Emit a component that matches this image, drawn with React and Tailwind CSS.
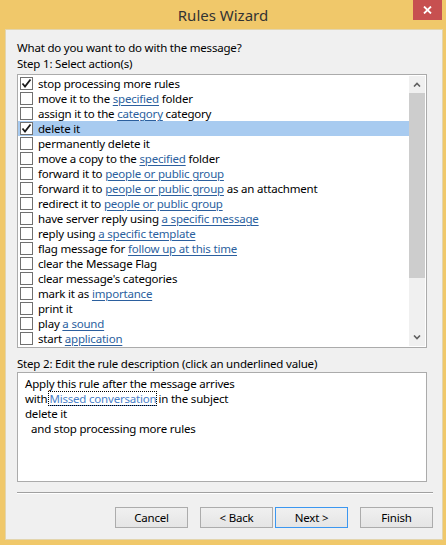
import React from 'react';

const font = { fontFamily: '"Segoe UI", "Noto Sans", "Open Sans", sans-serif' };

// each action is a list of parts; strings are plain text, objects are links
const actions = [
    { checked: true, parts: ['stop processing more rules'] },
    { parts: ['move it to the ', { link: 'specified' }, ' folder'] },
    { parts: ['assign it to the ', { link: 'category' }, ' category'] },
    { checked: true, selected: true, parts: ['delete it'] },
    { parts: ['permanently delete it'] },
    { parts: ['move a copy to the ', { link: 'specified' }, ' folder'] },
    { parts: ['forward it to ', { link: 'people or public group' }] },
    { parts: ['forward it to ', { link: 'people or public group' }, ' as an attachment'] },
    { parts: ['redirect it to ', { link: 'people or public group' }] },
    { parts: ['have server reply using ', { link: 'a specific message' }] },
    { parts: ['reply using ', { link: 'a specific template' }] },
    { parts: ['flag message for ', { link: 'follow up at this time' }] },
    { parts: ['clear the Message Flag'] },
    { parts: ["clear message's categories"] },
    { parts: ['mark it as ', { link: 'importance' }] },
    { parts: ['print it'] },
    { parts: ['play ', { link: 'a sound' }] },
    { parts: ['start ', { link: 'application' }] },
];

function Checkbox({ checked }) {
    return (
        <div className="w-[13px] h-[13px] border border-[#707070] bg-white flex items-center justify-center shrink-0">
            {checked && (
                <svg width="11" height="11" viewBox="0 0 11 11">
                    <path d="M1.5 5.5 L4 8.5 L9.5 1.5" stroke="#1a1a1a" strokeWidth="1.8" fill="none" />
                </svg>
            )}
        </div>
    );
}

function Link({ children }) {
    return <span className="text-[#2b5f9e] underline underline-offset-2 decoration-[#2b5f9e]">{children}</span>;
}

function Button({ children, focused }) {
    return (
        <button
            className={`w-[73px] h-[21px] text-[11.5px] text-black bg-gradient-to-b from-[#f0f0f0] to-[#e5e5e5] border ${focused ? 'border-[#3c97f0]' : 'border-[#acacac]'} flex items-center justify-center`}
        >
            {children}
        </button>
    );
}

export default function App() {
    return (
        <div className="w-[446px] h-[545px] bg-[#f0c86a] flex flex-col" style={font}>
            {/* title bar */}
            <div className="h-[29px] shrink-0 relative flex items-start justify-center">
                <div className="text-[15px] text-[#333333] mt-[4px] leading-[22px]">Rules Wizard</div>
                <div className="absolute right-[4px] top-0 w-[29px] h-[20px] bg-[#c75050] flex items-center justify-center">
                    <svg width="9" height="8" viewBox="0 0 9 8">
                        <path d="M1 0.5 L8 7.5 M8 0.5 L1 7.5" stroke="white" strokeWidth="1.8" />
                    </svg>
                </div>
            </div>

            {/* client area */}
            <div className="flex-1 ml-[5px] mr-[3px] mb-[5px] bg-[#f0f0f0] border border-[#e3d5ae] flex flex-col pl-[11px] pr-[9px] text-[11.5px] tracking-[-0.2px] text-black">
                <div className="mt-[10px] leading-[16px]">What do you want to do with the message?</div>
                <div className="leading-[16px]">Step 1: Select action(s)</div>

                {/* action list */}
                <div className="mt-[2px] w-[410px] h-[274px] border border-[#ababab] bg-white flex">
                    <div className="flex-1 flex flex-col pt-[1px]">
                        {actions.map((a, i) => (
                            <div
                                key={i}
                                className={`h-[15px] flex items-center gap-[5px] pl-[2px] whitespace-nowrap leading-[15px] ${a.selected ? 'bg-[#a8cbf0]' : ''}`}
                            >
                                <Checkbox checked={a.checked} />
                                <span>
                                    {a.parts.map((p, j) =>
                                        typeof p === 'string' ? <span key={j}>{p}</span> : <Link key={j}>{p.link}</Link>
                                    )}
                                </span>
                            </div>
                        ))}
                    </div>
                    {/* scrollbar */}
                    <div className="w-[16px] bg-[#f0f0f0] flex flex-col mr-[1px] my-[1px]">
                        <div className="h-[17px] flex items-center justify-center">
                            <svg width="8" height="5" viewBox="0 0 8 5">
                                <path d="M1 4.5 L4 1.5 L7 4.5" stroke="#606060" strokeWidth="1.6" fill="none" />
                            </svg>
                        </div>
                        <div className="h-[185px] bg-[#cdcdcd]" />
                        <div className="flex-1" />
                        <div className="h-[17px] flex items-center justify-center">
                            <svg width="8" height="5" viewBox="0 0 8 5">
                                <path d="M1 0.5 L4 3.5 L7 0.5" stroke="#606060" strokeWidth="1.6" fill="none" />
                            </svg>
                        </div>
                    </div>
                </div>

                <div className="mt-[8px] leading-[16px]">Step 2: Edit the rule description (click an underlined value)</div>

                {/* description box */}
                <div className="w-[410px] h-[110px] border border-[#ababab] bg-white px-[7px] pt-[3px] leading-[15px]">
                    <div>Apply this rule after the message arrives</div>
                    <div>
                        with
                        <span className="outline outline-1 outline-dotted outline-black -outline-offset-1 px-[1px] mx-[1px]">
                            <span className="text-[#4a7fc9] underline underline-offset-2 decoration-[#4a7fc9]">Missed conversation</span>
                        </span>
                        in the subject
                    </div>
                    <div>delete it</div>
                    <div className="pl-[6px]">and stop processing more rules</div>
                </div>

                <div className="mt-[10px] h-[1px] bg-[#a0a0a0] border-b border-white box-content" />

                <div className="mt-[13px] flex justify-end">
                    <div className="flex">
                        <Button>Cancel</Button>
                        <div className="w-[12px]" />
                        <Button>&lt; Back</Button>
                        <div className="w-[2px]" />
                        <Button focused>Next &gt;</Button>
                        <div className="w-[12px]" />
                        <Button>Finish</Button>
                    </div>
                </div>
            </div>
        </div>
    );
}
